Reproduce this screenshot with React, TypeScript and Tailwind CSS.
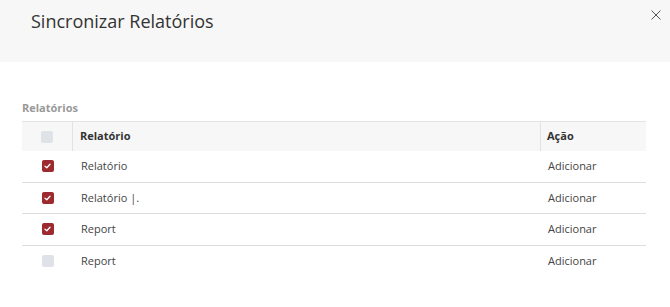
import React from 'react';

type Row = { name: string; action: string; checked: boolean };

const rows: Row[] = [
  { name: 'Relatório', action: 'Adicionar', checked: true },
  { name: 'Relatório |.', action: 'Adicionar', checked: true },
  { name: 'Report', action: 'Adicionar', checked: true },
  { name: 'Report', action: 'Adicionar', checked: false },
];

function Check({ checked }: { checked: boolean }) {
  if (!checked) {
    return <span className="block w-[12px] h-[12px] rounded-[2px] bg-[#dfe2e6]" />;
  }
  return (
    <span className="flex items-center justify-center w-[12px] h-[12px] rounded-[2px] bg-[#9c2a2e]">
      <svg width="7" height="6" viewBox="0 0 7 6" fill="none">
        <path d="M1 3.2 L2.8 4.8 L6 1.2" stroke="white" strokeWidth="1.3" strokeLinecap="round" strokeLinejoin="round" />
      </svg>
    </span>
  );
}

export default function App() {
  return (
    <div className="w-[670px] h-[307px] bg-white text-[#333] overflow-hidden" style={{ fontFamily: '"Open Sans", sans-serif' }}>
      {/* Modal header */}
      <div className="relative h-[62px] bg-[#f7f7f7] pl-[31px] pt-[9px]">
        <h1 className="text-[18px] leading-[24px] text-[#333]">Sincronizar Relatórios</h1>
        <button className="absolute right-[7px] top-[8px] w-[14px] h-[14px] flex items-center justify-center">
          <svg width="10" height="10" viewBox="0 0 10 10">
            <path d="M0.5 0.5 L9.5 9.5 M9.5 0.5 L0.5 9.5" stroke="#555" strokeWidth="1" />
          </svg>
        </button>
      </div>

      <div className="px-[22px] pr-[24px] pt-[38px]">
        <div className="text-[11px] leading-[15px] font-bold text-[#999] mb-[6px]">Relatórios</div>

        <div className="w-[624px] text-[11px]">
          {/* table header */}
          <div className="flex h-[30px] bg-[#f7f7f7] border-t border-[#e4e4e4]">
            <div className="w-[51px] flex items-center justify-center border-r border-[#e2e2e2]">
              <Check checked={false} />
            </div>
            <div className="w-[468px] flex items-center pl-[7px] font-bold text-[#333] border-r border-[#e2e2e2]">Relatório</div>
            <div className="flex-1 flex items-center pl-[6px] font-bold text-[#333]">Ação</div>
          </div>

          {rows.map((r, i) => (
            <div
              key={i}
              className={`flex h-[31.5px] ${i < rows.length - 1 ? 'border-b border-[#dedede]' : ''}`}
            >
              <div className="w-[51px] flex items-center justify-center">
                <Check checked={r.checked} />
              </div>
              <div className="w-[468px] flex items-center pl-[8px] text-[#444]">{r.name}</div>
              <div className="flex-1 flex items-center pl-[7px] text-[#444]">{r.action}</div>
            </div>
          ))}
        </div>
      </div>
    </div>
  );
}
